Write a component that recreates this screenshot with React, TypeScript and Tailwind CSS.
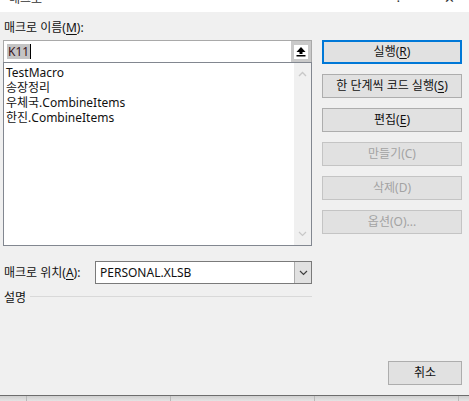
import React from "react";

const font = { fontFamily: '"Noto Sans", "Noto Sans CJK KR", sans-serif' };

const macros = ["TestMacro", "송장정리", "우체국.CombineItems", "한진.CombineItems"];

const Btn: React.FC<{ children: React.ReactNode; disabled?: boolean; primary?: boolean; className?: string }> = ({
  children,
  disabled,
  primary,
  className = "",
}) => (
  <button
    className={
      "h-[24px] flex items-center justify-center text-[12px] leading-none bg-[#e1e1e1] " +
      (primary
        ? "border-2 border-[#0078d7] text-[#111] "
        : disabled
        ? "border border-[#c4c4c4] text-[#a3a3a3] "
        : "border border-[#adadad] text-[#111] ") +
      className
    }
  >
    {children}
  </button>
);

const ChevronUp = ({ color }: { color: string }) => (
  <svg width="9" height="6" viewBox="0 0 9 6">
    <polyline points="1,5 4.5,1.5 8,5" fill="none" stroke={color} strokeWidth="1.4" />
  </svg>
);

const ChevronDown = ({ color }: { color: string }) => (
  <svg width="9" height="6" viewBox="0 0 9 6">
    <polyline points="1,1 4.5,4.5 8,1" fill="none" stroke={color} strokeWidth="1.2" />
  </svg>
);

export default function App() {
  return (
    <div className="w-[469px] h-[401px] bg-[#f0f0f0] flex flex-col overflow-hidden text-[#111]" style={font}>
      {/* title strip, mostly cut off */}
      <div className="h-[12px] bg-white relative overflow-hidden">
        <span className="absolute left-[9px] top-[-9px] text-[12px] leading-[16px] text-[#333]">매크로</span>
        <span className="absolute left-[396px] top-[-11px] text-[13px] leading-[16px] text-[#333]">?</span>
        <span className="absolute left-[444px] top-[-10px] text-[13px] leading-[16px] text-[#333]">✕</span>
      </div>

      <div className="flex flex-1 min-h-0">
        {/* left column */}
        <div className="w-[309px] ml-[3px] flex flex-col">
          <div className="mt-[8px] h-[16px] leading-[16px] text-[12px] pl-[1px]">
            매크로 이름(<span className="underline underline-offset-2">M</span>):
          </div>
          <div className="mt-[4px] h-[22px] border border-[#a9a9a9] border-b-0 bg-white flex">
            <div className="flex-1 flex items-center pl-[3px]">
              <span className="bg-[#c4c4c4] text-[12px] leading-[15px] text-[#3a1420] px-[1px]">K11</span>
              <span className="w-[1px] h-[15px] bg-black" />
            </div>
            <div className="w-[20px] bg-[#c9c9c9] flex items-center justify-center">
              <div className="w-[14px] h-[14px] bg-white flex items-center justify-center">
                <svg width="10" height="11" viewBox="0 0 10 11">
                  <polygon points="5,1 9.5,6 0.5,6" fill="#000" />
                  <rect x="3.5" y="5.5" width="3" height="2.5" fill="#000" />
                  <rect x="0.5" y="9" width="9" height="1.5" fill="#000" />
                </svg>
              </div>
            </div>
          </div>
          <div className="h-[184px] border border-[#828790] bg-white flex">
            <div className="flex-1 pl-[2px] pt-[2px] text-[12px] leading-[15px]">
              {macros.map((m) => (
                <div key={m}>{m}</div>
              ))}
            </div>
            <div className="w-[17px] bg-[#f0f0f0] flex flex-col items-center justify-between py-[8px]">
              <ChevronUp color="#c8c8c8" />
              <ChevronDown color="#c8c8c8" />
            </div>
          </div>

          <div className="mt-[15px] h-[23px] flex items-center">
            <div className="w-[92px] pl-[1px] text-[12px] leading-[16px]">
              매크로 위치(<span className="underline underline-offset-2">A</span>):
            </div>
            <div className="flex-1 h-full border border-[#7a7a7a] bg-white flex">
              <div className="flex-1 flex items-center pl-[4px] text-[12px]">PERSONAL.XLSB</div>
              <div className="w-[17px] bg-[#e1e1e1] border-l border-[#adadad] flex items-center justify-center">
                <ChevronDown color="#404040" />
              </div>
            </div>
          </div>

          <div className="mt-[6px] flex items-center">
            <span className="pl-[1px] text-[12px] leading-[16px]">설명</span>
            <div className="flex-1 ml-[4px] h-[1px] bg-[#d9d9d9] -mt-[3px]" />
          </div>
        </div>

        {/* right column */}
        <div className="ml-[10px] w-[140px] flex flex-col pt-[28px] pb-[10px]">
          <div className="flex flex-col gap-[10px]">
            <Btn primary>
              실행(<span className="underline underline-offset-2">R</span>)
            </Btn>
            <Btn>
              한 단계씩 코드 실행(<span className="underline underline-offset-2">S</span>)
            </Btn>
            <Btn>
              편집(<span className="underline underline-offset-2">E</span>)
            </Btn>
            <Btn disabled>만들기(C)</Btn>
            <Btn disabled>삭제(D)</Btn>
            <Btn disabled>옵션(O)...</Btn>
          </div>
          <div className="flex-1" />
          <Btn className="self-end w-[74px] border-[#adadad]">취소</Btn>
        </div>
      </div>

      {/* bottom edge of underlying window */}
      <div className="h-[6px] border-t border-[#6d6d6d] bg-gradient-to-b from-[#cfcfcf] to-[#e4e4e4] flex">
        <div className="w-[27px] border-r border-[#b8b8b8]" />
        <div className="w-[144px] border-r border-[#b8b8b8]" />
        <div className="w-[144px] border-r border-[#b8b8b8]" />
        <div className="w-[144px] border-r border-[#b8b8b8]" />
      </div>
    </div>
  );
}
